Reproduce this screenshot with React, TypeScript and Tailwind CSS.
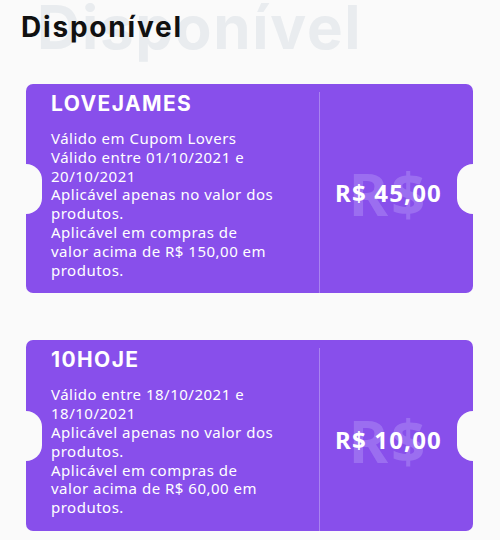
import React from "react";

type Coupon = {
  code: string;
  lines: string[];
  value: string;
};

const coupons: Coupon[] = [
  {
    code: "LOVEJAMES",
    lines: [
      "Válido em Cupom Lovers",
      "Válido entre 01/10/2021 e",
      "20/10/2021",
      "Aplicável apenas no valor dos",
      "produtos.",
      "Aplicável em compras de",
      "valor acima de R$ 150,00 em",
      "produtos.",
    ],
    value: "R$ 45,00",
  },
  {
    code: "10HOJE",
    lines: [
      "Válido entre 18/10/2021 e",
      "18/10/2021",
      "Aplicável apenas no valor dos",
      "produtos.",
      "Aplicável em compras de",
      "valor acima de R$ 60,00 em",
      "produtos.",
    ],
    value: "R$ 10,00",
  },
];

function CouponCard({ coupon }: { coupon: Coupon }) {
  return (
    <div className="relative flex overflow-hidden rounded-[7px] bg-[#884feb] text-white">
      {/* recortes laterais do ticket */}
      <span className="absolute left-[-16px] top-1/2 h-[50px] w-8 -translate-y-1/2 rounded-full bg-[#fafafa]" />
      <span className="absolute right-[-16px] top-1/2 h-[50px] w-8 -translate-y-1/2 rounded-full bg-[#fafafa]" />

      <div className="flex-1 pl-[25px] pr-2 pt-[7px] pb-[14px]">
        <h3 className="text-[21px] font-bold leading-[26px] tracking-[1.4px] font-['Inter',sans-serif]">
          {coupon.code}
        </h3>
        <div className="mt-3 text-[15px] leading-[18.8px] tracking-[0.5px] font-['Noto_Sans',sans-serif]">
          {coupon.lines.map((l, i) => (
            <p key={i}>{l}</p>
          ))}
        </div>
      </div>

      <div className="relative mt-2 grid w-[154px] place-items-center border-l border-[#a983f0] pr-4">
        <span className="col-start-1 row-start-1 text-[60px] font-bold leading-none tracking-[3px] text-[#9b6ef0] font-['Noto_Sans',sans-serif]">
          R$
        </span>
        <span className="col-start-1 row-start-1 text-[24px] font-bold tracking-[1.2px] font-['Noto_Sans',sans-serif]">
          {coupon.value}
        </span>
      </div>
    </div>
  );
}

export default function App() {
  return (
    <div className="min-h-[540px] w-[500px] bg-[#fafafa] pb-6">
      <header className="relative h-[84px] pl-[21px] pt-[10px]">
        <span
          aria-hidden
          className="absolute left-[37px] top-[-3px] text-[60px] font-bold leading-[60px] tracking-[1.7px] text-[#e9ecef] font-['Inter',sans-serif]"
        >
          Disponível
        </span>
        <h2 className="relative text-[28px] font-bold leading-[34px] tracking-[1.8px] text-[#111] font-['Inter',sans-serif]">
          Disponível
        </h2>
      </header>
      <div className="ml-[26px] mr-[27px] flex flex-col gap-[47px]">
        {coupons.map((c) => (
          <CouponCard key={c.code} coupon={c} />
        ))}
      </div>
    </div>
  );
}
